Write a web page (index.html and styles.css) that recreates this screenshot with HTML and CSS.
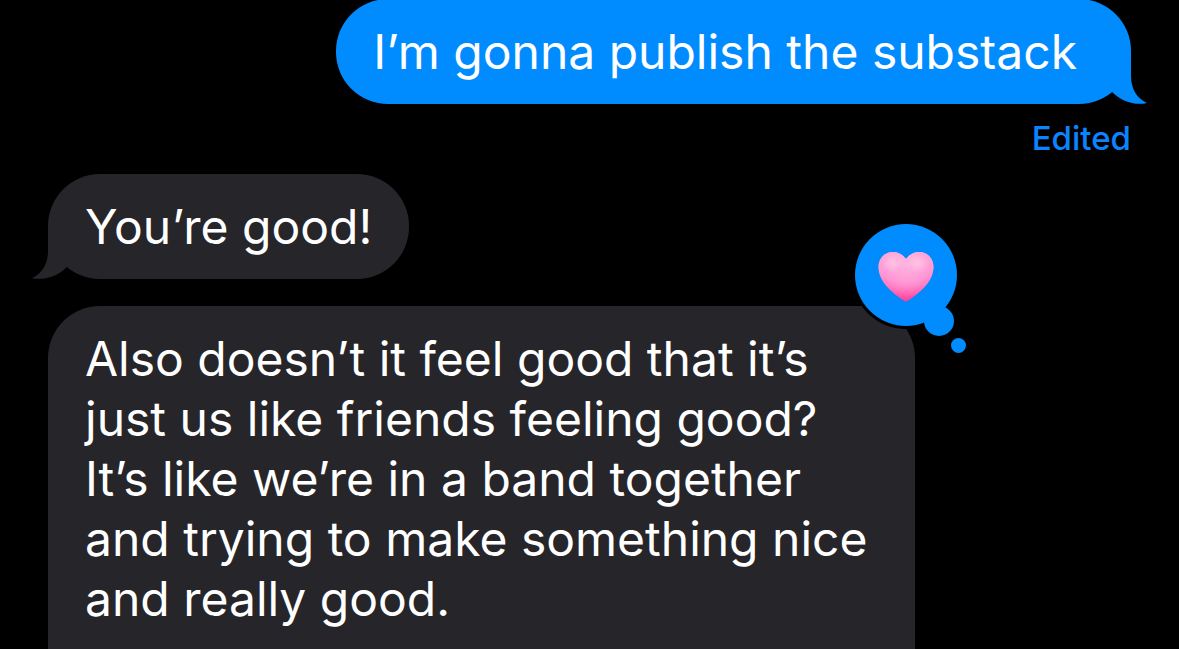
FILE: index.html
```html
<!DOCTYPE html>
<html lang="en">
<head>
<meta charset="utf-8">
<meta name="viewport" content="width=device-width, initial-scale=1">
<title>Messages</title>
<link rel="stylesheet" href="styles.css">
</head>
<body>
<main class="conversation">
  <div class="bubble sent">
    <p class="text">I’m gonna publish the substack</p>
    <svg class="tail" viewBox="0 0 48 54" aria-hidden="true"><path d="M32 2V26C32 40 39 49 48 53C36 56 22 51 13 42Z"/></svg>
  </div>
  <button class="edited" type="button">Edited</button>
  <div class="bubble received">
    <p class="text">You’re good!</p>
    <svg class="tail" viewBox="0 0 48 54" aria-hidden="true"><path d="M32 2V26C32 40 39 49 48 53C36 56 22 51 13 42Z"/></svg>
  </div>
  <div class="bubble received long">
    <p class="text">Also doesn’t it feel good that it’s just us like friends feeling good? It’s like we’re in a band together and trying to make something nice and really good.</p>
    <svg class="reaction" viewBox="0 0 116 134" role="img" aria-label="Heart reaction">
      <defs>
        <linearGradient id="heart-base" x1="0" y1="0" x2="0" y2="1">
          <stop offset="0" stop-color="#ffc4e2"/>
          <stop offset=".45" stop-color="#ff9ad4"/>
          <stop offset="1" stop-color="#ff3f9c"/>
        </linearGradient>
        <radialGradient id="heart-glow" gradientUnits="userSpaceOnUse" cx="54" cy="42" r="35">
          <stop offset="0" stop-color="#ffb4df"/>
          <stop offset=".6" stop-color="#ff9cd9" stop-opacity=".8"/>
          <stop offset="1" stop-color="#ff7cc2" stop-opacity="0"/>
        </radialGradient>
        <radialGradient id="heart-shine">
          <stop offset="0" stop-color="#ffd6ea" stop-opacity=".6"/>
          <stop offset="1" stop-color="#ffd6ea" stop-opacity="0"/>
        </radialGradient>
      </defs>
      <circle class="ring" cx="54" cy="54" r="54"/>
      <circle class="cloud" cx="54" cy="54" r="51"/>
      <circle class="cloud" cx="87" cy="100" r="15"/>
      <circle class="cloud" cx="106.500" cy="124.500" r="7.500"/>
      <path fill="url(#heart-base)" d="M54 38C50 33 46 31 41 31C33 31 26.500 37 26.500 46C26.500 60 39 71 51 79Q54 81.500 57 79C69 71 81.500 60 81.500 46C81.500 37 75 31 67 31C62 31 58 33 54 38Z"/>
      <path fill="url(#heart-glow)" d="M54 38C50 33 46 31 41 31C33 31 26.500 37 26.500 46C26.500 60 39 71 51 79Q54 81.500 57 79C69 71 81.500 60 81.500 46C81.500 37 75 31 67 31C62 31 58 33 54 38Z"/>
      <ellipse fill="url(#heart-shine)" cx="40" cy="42" rx="11" ry="10"/>
      <ellipse fill="url(#heart-shine)" cx="66" cy="42" rx="11" ry="10"/>
    </svg>
  </div>
</main>
</body>
</html>
```
FILE: styles.css
```css
* {
  box-sizing: border-box;
}

body {
  margin: 0;
  background: #000;
  color: #fff;
  font-family: Inter, "Liberation Sans", sans-serif;
}

.conversation {
  display: flex;
  flex-direction: column;
  height: 100vh;
  padding: 0 48px;
  overflow: hidden;
}

.bubble {
  position: relative;
  flex-shrink: 0;
  max-width: calc(80% + 1px);
  padding: 23px 37px 22px;
  border-radius: 52px;
}

.text {
  margin: 0;
  font-size: 48px;
  line-height: 60px;
}

.sent {
  align-self: flex-end;
  margin-top: -1px;
  padding-right: 54px;
  background: #008cff;
  fill: #008cff;
}

.received {
  align-self: flex-start;
  background: #26252a;
  fill: #26252a;
}

.long {
  flex-grow: 1;
  margin-top: 27px;
  border-radius: 52px 52px 0 0;
}

.tail {
  position: absolute;
  right: -16px;
  bottom: 0;
  width: 48px;
  height: 54px;
}

.received .tail {
  right: auto;
  left: -16px;
  transform: scaleX(-1);
}

.edited {
  align-self: flex-end;
  margin: 14px 0 16px;
  padding: 0;
  border: 0;
  background: none;
  color: #0a84ff;
  font: 500 33px/40px Inter, "Liberation Sans", sans-serif;
}

.reaction {
  position: absolute;
  top: -85px;
  right: -53px;
  width: 116px;
  height: 134px;
}

.ring {
  fill: #000;
}

.cloud {
  fill: #008cff;
}
```
